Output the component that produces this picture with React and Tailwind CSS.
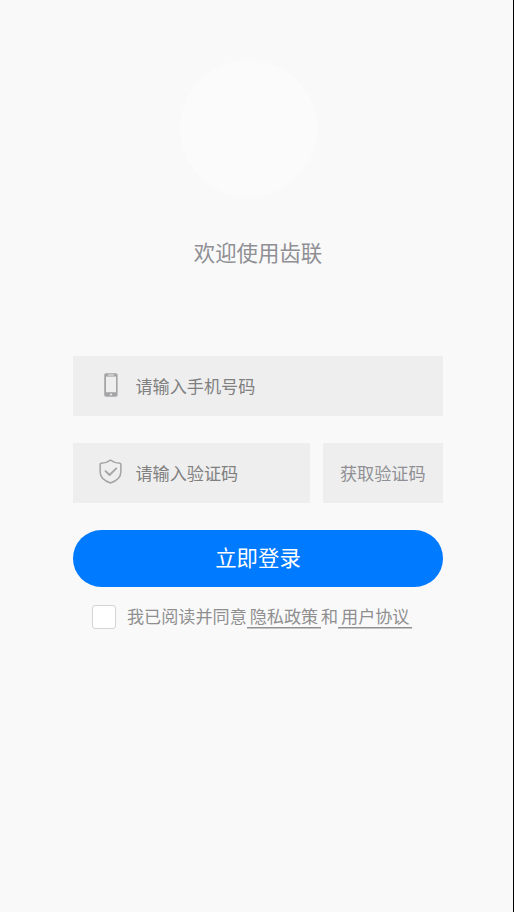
import { useState } from "react";

function PhoneIcon() {
  return (
    <svg width="14" height="24" viewBox="0 0 14 24" className="block">
      <rect x="0.2" y="0.2" width="13.4" height="23.6" rx="1.8" fill="#a5a5a8" />
      <rect x="2" y="3.6" width="10" height="15.6" fill="#eeeeee" />
      <rect x="4" y="1.4" width="6" height="1" rx="0.5" fill="#eeeeee" />
      <circle cx="7" cy="21.5" r="1" fill="#eeeeee" />
    </svg>
  );
}

function ShieldIcon() {
  return (
    <svg
      width="23"
      height="25"
      viewBox="0 0 24 26"
      fill="none"
      stroke="#a5a5a8"
      strokeLinecap="round"
      strokeLinejoin="round"
      className="block"
    >
      <path
        d="M12 1C9.2 3.2 5.8 4.3 2.2 4.3C1.5 4.3 1.2 4.7 1.2 5.4V13.5C1.2 18.8 5.8 22.8 12 25C18.2 22.8 22.8 18.8 22.8 13.5V5.4C22.8 4.7 22.5 4.3 21.8 4.3C18.2 4.3 14.8 3.2 12 1Z"
        strokeWidth="1.6"
      />
      <path d="M6.8 12.6L11 16.6L18 9.8" strokeWidth="2" />
    </svg>
  );
}

function Field({ icon, value, onChange, placeholder, className }) {
  return (
    <label className={`flex h-[60px] items-center bg-[#eeeeee] ${className}`}>
      <span className="mb-[3px] ml-[25.5px] flex w-6 shrink-0 justify-center">
        {icon}
      </span>
      <input
        type="text"
        value={value}
        onChange={(event) => onChange(event.target.value)}
        placeholder={placeholder}
        className="ml-[13px] h-full w-0 flex-1 bg-transparent pb-[2px] text-[17.13px] text-[#808080] outline-none placeholder:text-[#808080]"
      />
    </label>
  );
}

function App() {
  const [phone, setPhone] = useState("");
  const [code, setCode] = useState("");
  const [agreed, setAgreed] = useState(false);

  return (
    <main className="h-[912px] w-[514px] overflow-hidden border-r border-black bg-[#f9f9f9] pr-[70px] pl-[73px] font-['Noto_Sans_CJK_SC',sans-serif] text-[#8f8f94]">
      {/* Logo */}
      <div className="mt-[59.5px] ml-[107px] size-[137px] rounded-full bg-[#fbfbfb]" />

      <h1 className="mt-[39.5px] text-center text-[21.4px] leading-8">
        欢迎使用齿联
      </h1>

      {/* Login form */}
      <Field
        icon={<PhoneIcon />}
        value={phone}
        onChange={setPhone}
        placeholder="请输入手机号码"
        className="mt-[88px]"
      />
      <div className="mt-[27px] flex gap-[12.5px]">
        <Field
          icon={<ShieldIcon />}
          value={code}
          onChange={setCode}
          placeholder="请输入验证码"
          className="w-[237px]"
        />
        <button
          type="button"
          className="h-[60px] flex-1 bg-[#eeeeee] text-[17.13px]"
        >
          获取验证码
        </button>
      </div>

      <button
        type="button"
        className="mt-[27px] h-[57px] w-full rounded-full bg-[#007aff] pb-[2px] text-[21.4px] text-white"
      >
        立即登录
      </button>

      {/* Agreement */}
      <div className="mt-[18px] ml-[19px] flex items-start text-[17.13px] leading-[22px] whitespace-nowrap text-[#8f8f90]">
        <button
          type="button"
          role="checkbox"
          aria-checked={agreed}
          onClick={() => setAgreed(!agreed)}
          className={`mr-[11px] size-6 shrink-0 rounded-[3px] border border-[#d4d4d4] ${
            agreed ? "bg-[#007aff]" : "bg-white"
          }`}
        />
        <span>我已阅读并同意</span>
        <a className="h-[23px] border-b border-[#8f8f90] px-[2.9px] shadow-[0_1px_0_#c4c4c4]">
          隐私政策
        </a>
        <span>和</span>
        <a className="h-[23px] border-b border-[#8f8f90] px-[2.9px] shadow-[0_1px_0_#c4c4c4]">
          用户协议
        </a>
      </div>
    </main>
  );
}

export default App;
